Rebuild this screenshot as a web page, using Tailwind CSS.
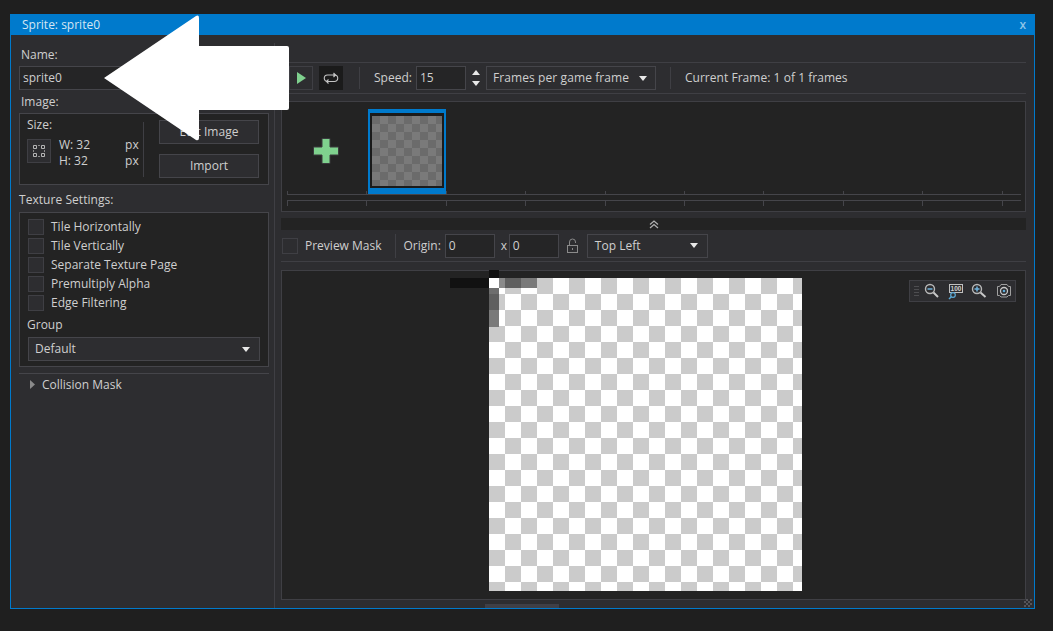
<!DOCTYPE html>
<html lang="en">
<head>
  <meta charset="UTF-8" />
  <title>Sprite: sprite0</title>
  <script src="https://cdn.jsdelivr.net/npm/@tailwindcss/browser@4"></script>
</head>
<body class="relative w-[1053px] h-[631px] overflow-hidden bg-[#1f1f1f] pt-[14px] pl-[10px] font-['Open_Sans',sans-serif] text-[12px] leading-[16px] text-[#cfcfcf]">

  <!-- Sprite window -->
  <div class="relative w-[1025px] h-[595px] flex flex-col border-x border-b border-[#007acc] bg-[#2d2d30]">
    <div class="h-[21px] -mx-px bg-[#007acc] flex items-center justify-between pl-[12px] pr-[9px] text-[#d6e6f2] shrink-0">
      <span>Sprite: sprite0</span>
      <span class="text-[#8cc4e8] font-semibold">x</span>
    </div>

    <div class="flex flex-1 min-h-0">
      <!-- Left panel -->
      <div class="w-[264px] shrink-0 border-r border-[#3f3f44] pl-[8px] mt-[8px] flex flex-col">
        <div class="pl-[2px] mt-[4px] h-[16px]">Name:</div>
        <div class="mt-[3px] w-[250px] h-[24px] border border-[#45454a] bg-[#252526] flex items-center pl-[3px]">sprite0</div>
        <div class="pl-[2px] mt-[4px] h-[16px]">Image:</div>

        <div class="mt-[3px] w-[250px] h-[72px] border border-[#45454a] bg-[#232323] flex">
          <div class="w-[123px] pl-[7px] pt-[3px]">
            <div class="h-[16px]">Size:</div>
            <div class="mt-[6px] flex">
              <div class="w-[24px] h-[24px] border border-[#3f3f44] bg-[#2d2d30] flex items-center justify-center">
                <svg width="14" height="14" viewBox="0 0 14 14" fill="none" stroke="#b5b5b5" stroke-width="1"><path d="M1.500 1.500h3v3h-3zM9.500 1.500h3v3h-3zM1.500 9.500h3v3h-3zM9.500 9.500h3v3h-3z"/><path d="M6 1.500h2M6 12.500h2M1.500 6v2M12.500 6v2" stroke="#8a8a8a"/></svg>
              </div>
              <div class="ml-[8px] -mt-[2px]">
                <div class="h-[16px]">W: 32</div>
                <div class="h-[16px]">H: 32</div>
              </div>
              <div class="ml-[35px] -mt-[2px] -mr-[10px]">
                <div class="h-[16px]">px</div>
                <div class="h-[16px]">px</div>
              </div>
            </div>
          </div>
          <div class="w-px h-[55px] mt-[8px] bg-[#3f3f44]"></div>
          <div class="ml-[15px] pt-[6px] flex flex-col gap-[10px]">
            <div class="w-[100px] h-[24px] border border-[#45454a] bg-[#2d2d30] flex items-center justify-center">Edit Image</div>
            <div class="w-[100px] h-[24px] border border-[#45454a] bg-[#2d2d30] flex items-center justify-center">Import</div>
          </div>
        </div>

        <div class="mt-[7px] h-[16px] tracking-[0.05px]">Texture Settings:</div>
        <div class="mt-[4px] w-[250px] h-[155px] border border-[#45454a] bg-[#232323] pl-[8px] pt-[6px]">
          <div class="flex flex-col gap-[3px]">
            <div class="flex items-center h-[16px] gap-[7px]"><span class="w-[16px] h-[16px] border border-[#3f3f44] bg-[#2d2d30]"></span>Tile Horizontally</div>
            <div class="flex items-center h-[16px] gap-[7px]"><span class="w-[16px] h-[16px] border border-[#3f3f44] bg-[#2d2d30]"></span>Tile Vertically</div>
            <div class="flex items-center h-[16px] gap-[7px]"><span class="w-[16px] h-[16px] border border-[#3f3f44] bg-[#2d2d30]"></span>Separate Texture Page</div>
            <div class="flex items-center h-[16px] gap-[7px]"><span class="w-[16px] h-[16px] border border-[#3f3f44] bg-[#2d2d30]"></span>Premultiply Alpha</div>
            <div class="flex items-center h-[16px] gap-[7px]"><span class="w-[16px] h-[16px] border border-[#3f3f44] bg-[#2d2d30]"></span>Edge Filtering</div>
          </div>
          <div class="mt-[6px] -ml-px h-[16px]">Group</div>
          <div class="mt-[4px] w-[232px] h-[24px] border border-[#45454a] bg-[#2d2d30] flex items-center justify-between pl-[6px] pr-[9px]">
            Default
            <svg width="8" height="5" viewBox="0 0 8 5"><path d="M0 0h8L4 5z" fill="#e8e8e8"/></svg>
          </div>
        </div>

        <div class="mt-[6px] w-[250px] border-t border-[#45454a] h-[22px] flex items-center pl-[11px]">
          <svg width="5" height="9" viewBox="0 0 5 9"><path d="M0 0l5 4.500L0 9z" fill="#8a8a8a"/></svg>
          <span class="ml-[7px]">Collision Mask</span>
        </div>
      </div>

      <!-- Right panel -->
      <div class="flex-1 pl-[6px] pr-[8px] flex flex-col min-w-0">
        <div class="h-[28px] border-b border-[#3f3f44] shrink-0"></div>

        <!-- Playback toolbar -->
        <div class="h-[31px] shrink-0 border-b border-[#3f3f44] flex items-center pl-[8px]">
          <div class="w-[24px] h-[24px] border border-[#3f3f44] flex items-center justify-center">
            <svg width="9" height="12" viewBox="0 0 9 12"><path d="M0 0l9 6-9 6z" fill="#7fd18e"/></svg>
          </div>
          <div class="ml-[6px] w-[24px] h-[24px] bg-[#1b1b1b] flex items-center justify-center">
            <svg width="16" height="12" viewBox="0 0 16 12" fill="none" stroke="#c4c4c4" stroke-width="1.100"><path d="M6 9.500H4.500a3.200 3.200 0 0 1 0-6.500H12.500M10.500 1l2 2-2 2"/><path d="M10 3h1.500a3.200 3.200 0 0 1 0 6.500H3.500M5.500 7.500l-2 2 2 2"/></svg>
          </div>
          <div class="ml-[16px] w-px h-[22px] bg-[#3f3f44]"></div>
          <span class="ml-[14px]">Speed:</span>
          <div class="ml-[4px] w-[50px] h-[24px] border border-[#45454a] bg-[#252526] flex items-center pl-[3px]">15</div>
          <div class="ml-[4px] w-[12px] flex flex-col items-center gap-[6px]">
            <svg width="8" height="5" viewBox="0 0 8 5"><path d="M0 5h8L4 0z" fill="#e8e8e8"/></svg>
            <svg width="8" height="5" viewBox="0 0 8 5"><path d="M0 0h8L4 5z" fill="#e8e8e8"/></svg>
          </div>
          <div class="ml-[4px] w-[170px] h-[24px] border border-[#45454a] flex items-center justify-between pl-[6px] pr-[8px] tracking-[0.1px]">
            Frames per game frame
            <svg width="8" height="5" viewBox="0 0 8 5"><path d="M0 0h8L4 5z" fill="#e8e8e8"/></svg>
          </div>
          <div class="ml-[14px] w-px h-[22px] bg-[#3f3f44]"></div>
          <span class="ml-[14px] tracking-[0.04px]">Current Frame: 1 of 1 frames</span>
        </div>

        <!-- Frame strip -->
        <div class="mt-[7px] h-[111px] shrink-0 border border-[#3f3f44] bg-[#232323] pt-[7px]">
          <div class="flex h-[85px]">
            <div class="w-[86px] pl-[2px] h-[84px] flex items-center justify-center">
              <svg width="28" height="28" viewBox="0 0 28 28"><path d="M10 1.500h8V10h8.500v8H18v8.500h-8V18H1.500v-8H10z" fill="#7fd18e" stroke="#3a3a3d" stroke-width="1"/></svg>
            </div>
            <div class="w-[78px] h-[85px] border-[#007acc] border-x-[2px] border-t-[4px] border-b-[6px] bg-[#1b1b1b] pt-[3px] pl-[2px]">
              <div class="w-[70px] h-[70px] bg-[repeating-conic-gradient(#7a7a7a_0_25%,#6b6b6b_0_50%)] bg-[size:16px_16px]"></div>
            </div>
          </div>
          <div class="-mt-[3px] ml-[5px] mr-[4px]">
            <div class="h-[4px] border-b border-[#45454a] bg-[repeating-linear-gradient(90deg,#45454a_0,#45454a_1px,transparent_1px,transparent_79.4px)]"></div>
            <div class="mt-[5px] h-[6px] border-t border-[#45454a] bg-[repeating-linear-gradient(90deg,#45454a_0,#45454a_1px,transparent_1px,transparent_79.4px)]"></div>
          </div>
        </div>

        <!-- Collapse bar -->
        <div class="mt-[6px] h-[12px] shrink-0 bg-[#232323] flex items-center justify-center">
          <svg width="10" height="9" viewBox="0 0 10 9" fill="none" stroke="#b0b0b0" stroke-width="1.200"><path d="M1 4.500L5 1l4 3.500M1 8l4-3.500L9 8"/></svg>
        </div>

        <!-- Origin toolbar -->
        <div class="h-[32px] shrink-0 border-b border-[#3f3f44] flex items-center pl-px">
          <span class="w-[16px] h-[16px] border border-[#3f3f44]"></span>
          <span class="ml-[7px]">Preview Mask</span>
          <div class="ml-[13px] w-px h-[24px] bg-[#3f3f44]"></div>
          <span class="ml-[8px]">Origin:</span>
          <div class="ml-[4px] w-[50px] h-[24px] border border-[#45454a] bg-[#252526] flex items-center pl-[3px]">0</div>
          <span class="ml-[4px] w-[10px] text-center">x</span>
          <div class="w-[50px] h-[24px] border border-[#45454a] bg-[#252526] flex items-center pl-[3px]">0</div>
          <svg class="ml-[7px]" width="13" height="16" viewBox="0 0 13 16" fill="none" stroke="#8a8a8a" stroke-width="1"><rect x="1.500" y="7.500" width="10" height="7"/><path d="M3.500 7.500V4a3 3 0 0 1 6 0v1M6.500 10v2"/></svg>
          <div class="ml-[8px] w-[121px] h-[24px] border border-[#45454a] flex items-center justify-between pl-[7px] pr-[9px]">
            Top Left
            <svg width="8" height="5" viewBox="0 0 8 5"><path d="M0 0h8L4 5z" fill="#e8e8e8"/></svg>
          </div>
        </div>

        <!-- Sprite canvas: everything inside sits at its own canvas position -->
        <div class="relative mt-[8px] h-[330px] shrink-0 border border-[#3f3f44] bg-[#232323]">
          <div class="absolute left-[207px] top-[7px] w-[313px] h-[313px] bg-[repeating-conic-gradient(#cbcbcb_0_25%,#ffffff_0_50%)] bg-[size:32px_32px]"></div>
          <div class="absolute left-[168px] top-[7px] w-[39px] h-[10px] bg-[#111111]"></div>
          <div class="absolute left-[207px] top-[-1px] w-[10px] h-[8px] bg-[#111111]"></div>
          <div class="absolute left-[217px] top-[7px] w-[6px] h-[10px] bg-[#8a8a8a]"></div>
          <div class="absolute left-[223px] top-[7px] w-[16px] h-[10px] bg-[#5f5f5f]"></div>
          <div class="absolute left-[239px] top-[7px] w-[16px] h-[10px] bg-[#7a7a7a]"></div>
          <div class="absolute left-[207px] top-[17px] w-[10px] h-[6px] bg-[#6e6e6e]"></div>
          <div class="absolute left-[207px] top-[23px] w-[10px] h-[16px] bg-[#5f5f5f]"></div>
          <div class="absolute left-[207px] top-[39px] w-[10px] h-[17px] bg-[#7a7a7a]"></div>

          <!-- Zoom toolbar -->
          <div class="absolute right-[9px] top-[9px] w-[107px] h-[22px] border border-[#3f3f44] bg-[#2d2d30]">
            <svg class="-m-px" width="107" height="22" viewBox="0 0 107 22" fill="none">
              <path d="M5 6.500h5M5 9.500h5M5 12.500h5M5 15.500h5" stroke="#4d4d50"/>
              <circle cx="21" cy="9" r="4.500" stroke="#b8b8b8" stroke-width="1.400"/>
              <path d="M18.500 9h5" stroke="#6fb3dc" stroke-width="1.500"/>
              <path d="M24.500 12.500l4.500 4.500" stroke="#c8c8c8" stroke-width="2"/>
              <rect x="40.500" y="4.500" width="13" height="8" stroke="#c0c0c0"/>
              <text x="47" y="11" text-anchor="middle" font-size="6.500" font-weight="700" fill="#d0d0d0" font-family="Liberation Sans, sans-serif">100</text>
              <circle cx="44" cy="15" r="2.300" stroke="#5aa9d6" stroke-width="1.200"/>
              <path d="M42.300 16.800L40 19" stroke="#5aa9d6" stroke-width="1.500"/>
              <circle cx="68" cy="9" r="4.500" stroke="#b8b8b8" stroke-width="1.400"/>
              <path d="M65.500 9h5M68 6.500v5" stroke="#6fb3dc" stroke-width="1.500"/>
              <path d="M71.500 12.500l5 4.500" stroke="#c8c8c8" stroke-width="2"/>
              <path d="M88.500 6.500h2l1.500-2h6l1.500 2h2v9h-2l-1.500 1.500h-6l-1.500-1.500h-2z" stroke="#a0a0a0"/>
              <circle cx="95" cy="11" r="3.500" stroke="#c8c8c8" stroke-width="1.300"/>
              <circle cx="95" cy="11" r="1.300" fill="#5aa9d6"/>
            </svg>
          </div>
        </div>
      </div>
    </div>

    <!-- Bottom scroll handle and resize grip -->
    <div class="absolute left-[474px] bottom-0 w-[74px] h-[4px] bg-[#3f3f46]"></div>
    <div class="absolute right-[2px] bottom-[1px] w-[8px] h-[8px] bg-[repeating-conic-gradient(#55555a_0_25%,transparent_0_50%)] bg-[size:4px_4px]"></div>
  </div>

  <!-- White arrow annotation over the window -->
  <svg class="absolute left-[104px] top-[15px]" width="186" height="126" viewBox="0 0 186 126">
    <path d="M0 63L92 1q3-1.500 3 2V31h88q2 0 2 2v60q0 2-2 2H95v28q0 3-3 2z" fill="#ffffff"/>
  </svg>
</body>
</html>
